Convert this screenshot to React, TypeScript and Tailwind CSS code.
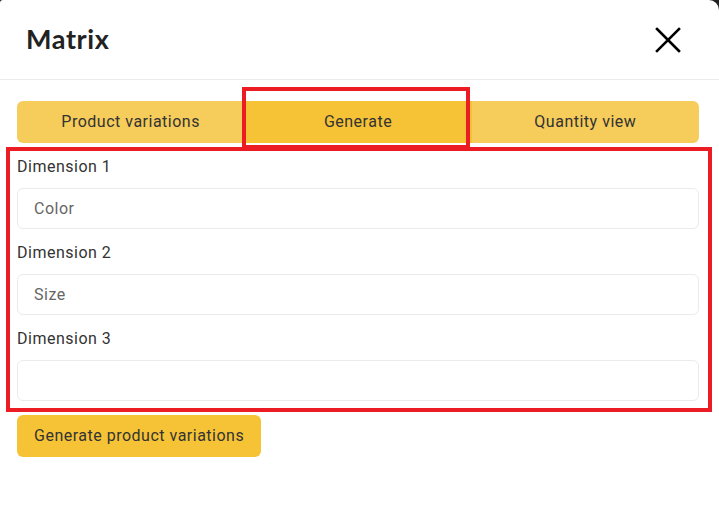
import { useState } from 'react';

const tabs = ['Product variations', 'Generate', 'Quantity view'];

const dimensions = [
  { label: 'Dimension 1', placeholder: 'Color' },
  { label: 'Dimension 2', placeholder: 'Size' },
  { label: 'Dimension 3', placeholder: '' },
];

export default function App() {
  const [active, setActive] = useState(1);

  return (
    <div className="w-[719px] h-[515px] bg-[#222] overflow-hidden" style={{ fontFamily: 'Roboto, "Open Sans", sans-serif' }}>
      <div className="relative w-full h-full bg-white rounded-tl-[3px] rounded-tr-[10px] text-[#333] tracking-[0.5px]">
        <div className="h-[80px] flex items-center justify-between pl-[26px] pr-[36px] border-b border-[#ebebeb]">
          <h1 className="text-[27px] font-bold text-[#222] tracking-[0.6px]" style={{ fontFamily: 'Lato, sans-serif' }}>Matrix</h1>
          <button className="text-black">
            <svg width="30" height="30" viewBox="0 0 30 30" fill="none" stroke="currentColor" strokeWidth="2.6" strokeLinecap="square">
              <path d="M4 4 L26 26 M26 4 L4 26" />
            </svg>
          </button>
        </div>

        <div className="pl-[17px] pr-[20px] pt-[21px]">
          <div className="flex h-[42px] rounded-[6px] overflow-hidden">
            {tabs.map((t, i) => (
              <button
                key={t}
                onClick={() => setActive(i)}
                className={
                  'flex-1 flex items-center justify-center text-[16px] text-[#333] ' +
                  (i === active ? 'bg-[#f6c336]' : 'bg-[#f6cc5a]')
                }
              >
                {t}
              </button>
            ))}
          </div>

          {dimensions.map((d) => (
            <div key={d.label} className="mt-[14px]">
              <label className="block h-[20px] leading-[20px] text-[16px] text-[#333] mb-[11px]">{d.label}</label>
              <input
                className="w-full h-[41px] rounded-[6px] border border-[#ebebeb] px-[16px] text-[16px] tracking-[0.5px] outline-none placeholder:text-[#666]"
                placeholder={d.placeholder}
              />
            </div>
          ))}

          <button className="mt-[14px] h-[42px] px-[17px] rounded-[6px] bg-[#f6c336] text-[16px] text-[#333]">
            Generate product variations
          </button>
        </div>

        {/* annotation boxes */}
        <div className="absolute left-[242px] top-[87px] w-[228px] h-[62px] border-4 border-[#ec1c24] pointer-events-none" />
        <div className="absolute left-[6px] top-[147px] w-[706px] h-[265px] border-4 border-[#ec1c24] pointer-events-none" />
      </div>
    </div>
  );
}
